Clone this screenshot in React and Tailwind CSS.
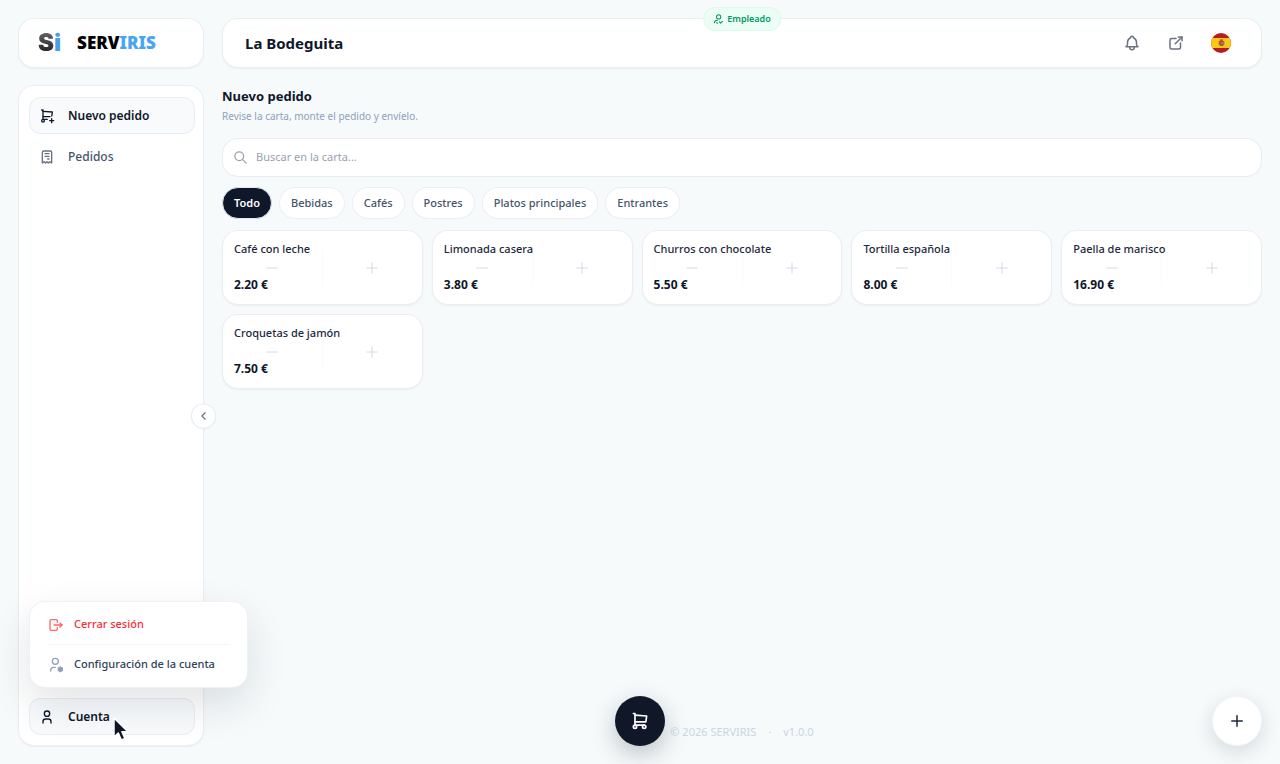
import React from 'react';
import {
  TbBell,
  TbChevronLeft,
  TbExternalLink,
  TbLogout,
  TbMinus,
  TbPlus,
  TbReceipt,
  TbSearch,
  TbShoppingCart,
  TbShoppingCartPlus,
  TbUser,
} from 'react-icons/tb';
import { clsx } from 'clsx';

const categories = ['Todo', 'Bebidas', 'Cafés', 'Postres', 'Platos principales', 'Entrantes'];

const products = [
  { name: 'Café con leche', price: '2.20 €' },
  { name: 'Limonada casera', price: '3.80 €' },
  { name: 'Churros con chocolate', price: '5.50 €' },
  { name: 'Tortilla española', price: '8.00 €' },
  { name: 'Paella de marisco', price: '16.90 €' },
  { name: 'Croquetas de jamón', price: '7.50 €' },
];

const SpainFlag = () => (
  <svg viewBox="0 0 20 20" className="size-5" aria-hidden="true">
    <clipPath id="flag-circle">
      <circle cx="10" cy="10" r="10" />
    </clipPath>
    <g clipPath="url(#flag-circle)">
      <rect width="20" height="20" fill="#b91c1c" />
      <rect y="5" width="20" height="10" fill="#fbc914" />
      <path d="M7 8h1v4H7zM13 8h1v4h-1z" fill="#c9a36a" />
      <path d="M8 8h5v3a2.500 2.200 0 0 1-5 0z" fill="#b4552d" />
      <path d="M8.800 6.600h3.200v1.200H8.800z" fill="#a3352a" />
      <path d="M10.500 9h2v1.800h-2z" fill="#8f84a5" />
    </g>
  </svg>
);

const Cursor = () => (
  <svg viewBox="0 0 18 26" className="pointer-events-none absolute left-[82px] top-[17px] z-30 h-[26px] w-[18px]" aria-hidden="true">
    <path
      d="M2 2v19l4.300-4 3 7 3.600-1.500-3-6.800h6z"
      fill="#0f1526"
      stroke="#fff"
      strokeWidth="1.500"
      strokeLinejoin="round"
    />
  </svg>
);

const UserGearIcon = () => (
  <svg
    viewBox="0 0 24 24"
    className="size-4 shrink-0 text-slate-400"
    fill="none"
    stroke="currentColor"
    strokeWidth="2"
    strokeLinecap="round"
    strokeLinejoin="round"
    aria-hidden="true"
  >
    <circle cx="11" cy="6.500" r="4.500" />
    <path d="M4 21v-1a4.500 4.500 0 0 1 4.500-4.500H11" />
    <circle cx="18.500" cy="18.500" r="3" fill="currentColor" />
    <path d="M18.500 14.500v8M15 16.500l7 4M15 20.500l7-4" strokeWidth="1.500" />
  </svg>
);

const WaiterIcon = () => (
  <svg
    viewBox="0 0 24 24"
    className="size-[10px] shrink-0"
    fill="none"
    stroke="currentColor"
    strokeWidth="2.500"
    strokeLinecap="round"
    strokeLinejoin="round"
    aria-hidden="true"
  >
    <circle cx="13" cy="7" r="5" />
    <path d="M3 21c0-4 3-6 7-6M8 21l3 1M15 19l2.500 3 4.500-4" />
  </svg>
);

const Logo = () => (
  <div className="flex h-[50px] shrink-0 items-center gap-4 rounded-2xl border border-slate-200/70 bg-white px-[19px] shadow-xs">
    <span className="font-['Inter',sans-serif] text-[24px] leading-6 font-black" aria-hidden="true">
      <span className="bg-linear-to-b from-neutral-500 to-neutral-900 bg-clip-text text-transparent">S</span>
      <span className="text-[#4a9fe8]">i</span>
    </span>
    <span className="text-[17px] leading-6 font-black text-black">
      SERV<span className="text-[#4aa5f0]">IRIS</span>
    </span>
  </div>
);

const NavItem = ({ icon: Icon, label, active, children }) => (
  <button
    type="button"
    className={clsx(
      'relative flex h-[37px] w-full items-center gap-[13px] rounded-xl border px-[9px] text-xs',
      active
        ? 'border-slate-200/70 bg-slate-50 font-semibold text-slate-900'
        : 'border-transparent font-medium text-slate-600'
    )}
  >
    <Icon size={16} className={active ? 'text-slate-900' : 'text-gray-500'} />
    {label}
    {children}
  </button>
);

const AccountMenu = () => (
  <div className="absolute bottom-[57px] left-[10px] z-20 flex w-[219px] flex-col rounded-2xl border border-slate-200/60 bg-white px-[18px] py-[3px] text-[11px] font-medium shadow-[0_16px_40px_rgba(15,23,42,0.12)]">
    <button type="button" className="flex h-[39px] items-center gap-[10px] whitespace-nowrap text-red-500">
      <TbLogout size={16} className="text-red-400" />
      Cerrar sesión
    </button>
    <div className="border-t border-slate-100" />
    <button type="button" className="flex h-[39px] items-center gap-[10px] whitespace-nowrap text-slate-700">
      <UserGearIcon />
      Configuración de la cuenta
    </button>
  </div>
);

const Sidebar = () => (
  <aside className="flex w-[186px] shrink-0 flex-col gap-[17px]">
    <Logo />
    <div className="relative flex flex-1 flex-col justify-between rounded-2xl border border-slate-200/70 bg-white pt-[11px] pr-[8px] pb-[10px] pl-[10px] shadow-xs">
      <nav className="flex flex-col gap-1">
        <NavItem icon={TbShoppingCartPlus} label="Nuevo pedido" active />
        <NavItem icon={TbReceipt} label="Pedidos" />
      </nav>
      <NavItem icon={TbUser} label="Cuenta" active>
        <Cursor />
      </NavItem>
      <AccountMenu />
      <button
        type="button"
        aria-label="Contraer menú"
        className="absolute top-1/2 -right-[13px] flex size-[25px] -translate-y-1/2 items-center justify-center rounded-full border border-slate-200/80 bg-white text-gray-500 shadow-xs"
      >
        <TbChevronLeft size={13} />
      </button>
    </div>
  </aside>
);

const Header = () => (
  <header className="relative flex h-[50px] shrink-0 items-center justify-between rounded-2xl border border-slate-200/70 bg-white pr-[30px] pl-[22px] shadow-xs">
    <h1 className="text-[15px] font-bold text-slate-900">La Bodeguita</h1>
    <span className="absolute -top-3 left-1/2 flex h-6 -translate-x-1/2 items-center gap-1 rounded-full border border-emerald-100/60 bg-emerald-50 px-[9px] text-[9px] font-semibold text-emerald-600">
      <WaiterIcon />
      Empleado
    </span>
    <div className="flex items-center gap-[26px] text-gray-500">
      <button type="button" aria-label="Notificaciones">
        <TbBell size={18} />
      </button>
      <button type="button" aria-label="Abrir carta">
        <TbExternalLink size={18} />
      </button>
      <button type="button" aria-label="Español">
        <SpainFlag />
      </button>
    </div>
  </header>
);

const ProductCard = ({ name, price }) => (
  <li className="relative flex h-[75px] flex-col justify-between rounded-2xl border border-slate-200/70 bg-white px-[11px] pt-2 pb-[9px] shadow-xs">
    <div className="absolute inset-0 flex items-stretch text-slate-300/80">
      <button type="button" aria-label={`Quitar ${name}`} className="flex flex-1 items-center justify-center">
        <TbMinus size={18} strokeWidth={1.5} />
      </button>
      <div className="my-[18px] w-px bg-slate-50" />
      <button type="button" aria-label={`Añadir ${name}`} className="flex flex-1 items-center justify-center">
        <TbPlus size={18} strokeWidth={1.5} />
      </button>
    </div>
    <span className="pointer-events-none relative text-[11px] leading-5 font-medium text-slate-800">{name}</span>
    <span className="pointer-events-none relative text-xs leading-5 font-bold text-slate-900">{price}</span>
  </li>
);

const App = () => {
  return (
    <div className="flex min-h-screen gap-[18px] bg-[#f6fafb] p-[18px] font-['Noto_Sans','Open_Sans',sans-serif] text-slate-900">
      <Sidebar />
      <div className="flex min-w-0 flex-1 flex-col">
        <Header />
        <main className="flex flex-1 flex-col pt-[18px]">
          <h2 className="text-[13px] leading-5 font-bold">Nuevo pedido</h2>
          <p className="mt-[2px] text-[10px] leading-4 text-slate-400">Revise la carta, monte el pedido y envíelo.</p>
          <label className="mt-[14px] flex h-[39px] items-center gap-2 rounded-2xl border border-slate-200/80 bg-white px-[10px] text-gray-400">
            <TbSearch size={15} />
            <input
              type="search"
              aria-label="Buscar en la carta"
              placeholder="Buscar en la carta..."
              className="min-w-0 flex-1 bg-transparent text-[11px] text-slate-700 outline-none placeholder:text-gray-400"
            />
          </label>
          <div className="mt-[10px] flex flex-wrap gap-[7px]">
            {categories.map((category, i) => (
              <button
                key={category}
                type="button"
                className={clsx(
                  'h-8 rounded-full border px-[11px] text-[11px]',
                  i === 0
                    ? 'border-slate-200 bg-slate-900 font-semibold text-white'
                    : 'border-slate-200/70 bg-white font-medium text-slate-600'
                )}
              >
                {category}
              </button>
            ))}
          </div>
          <ul className="mt-[11px] grid grid-cols-5 gap-[9px]">
            {products.map((product) => (
              <ProductCard key={product.name} {...product} />
            ))}
          </ul>
        </main>
        <footer className="flex items-center justify-center gap-3 pb-1 text-[11px] leading-5 text-slate-300">
          <span>© 2026 SERVIRIS</span>
          <span>·</span>
          <span>v1.0.0</span>
        </footer>
      </div>
      <button
        type="button"
        aria-label="Ver pedido"
        className="fixed bottom-[18px] left-1/2 flex size-[50px] -translate-x-1/2 items-center justify-center rounded-full bg-[#0f1729] text-white shadow-[0_8px_24px_rgba(15,23,42,0.25)]"
      >
        <TbShoppingCart size={20} />
      </button>
      <button
        type="button"
        aria-label="Añadir"
        className="fixed right-[18px] bottom-[18px] flex size-[50px] items-center justify-center rounded-full border border-slate-100 bg-white text-slate-800 shadow-[0_6px_20px_rgba(15,23,42,0.14)]"
      >
        <TbPlus size={18} />
      </button>
    </div>
  );
};

export default App;
